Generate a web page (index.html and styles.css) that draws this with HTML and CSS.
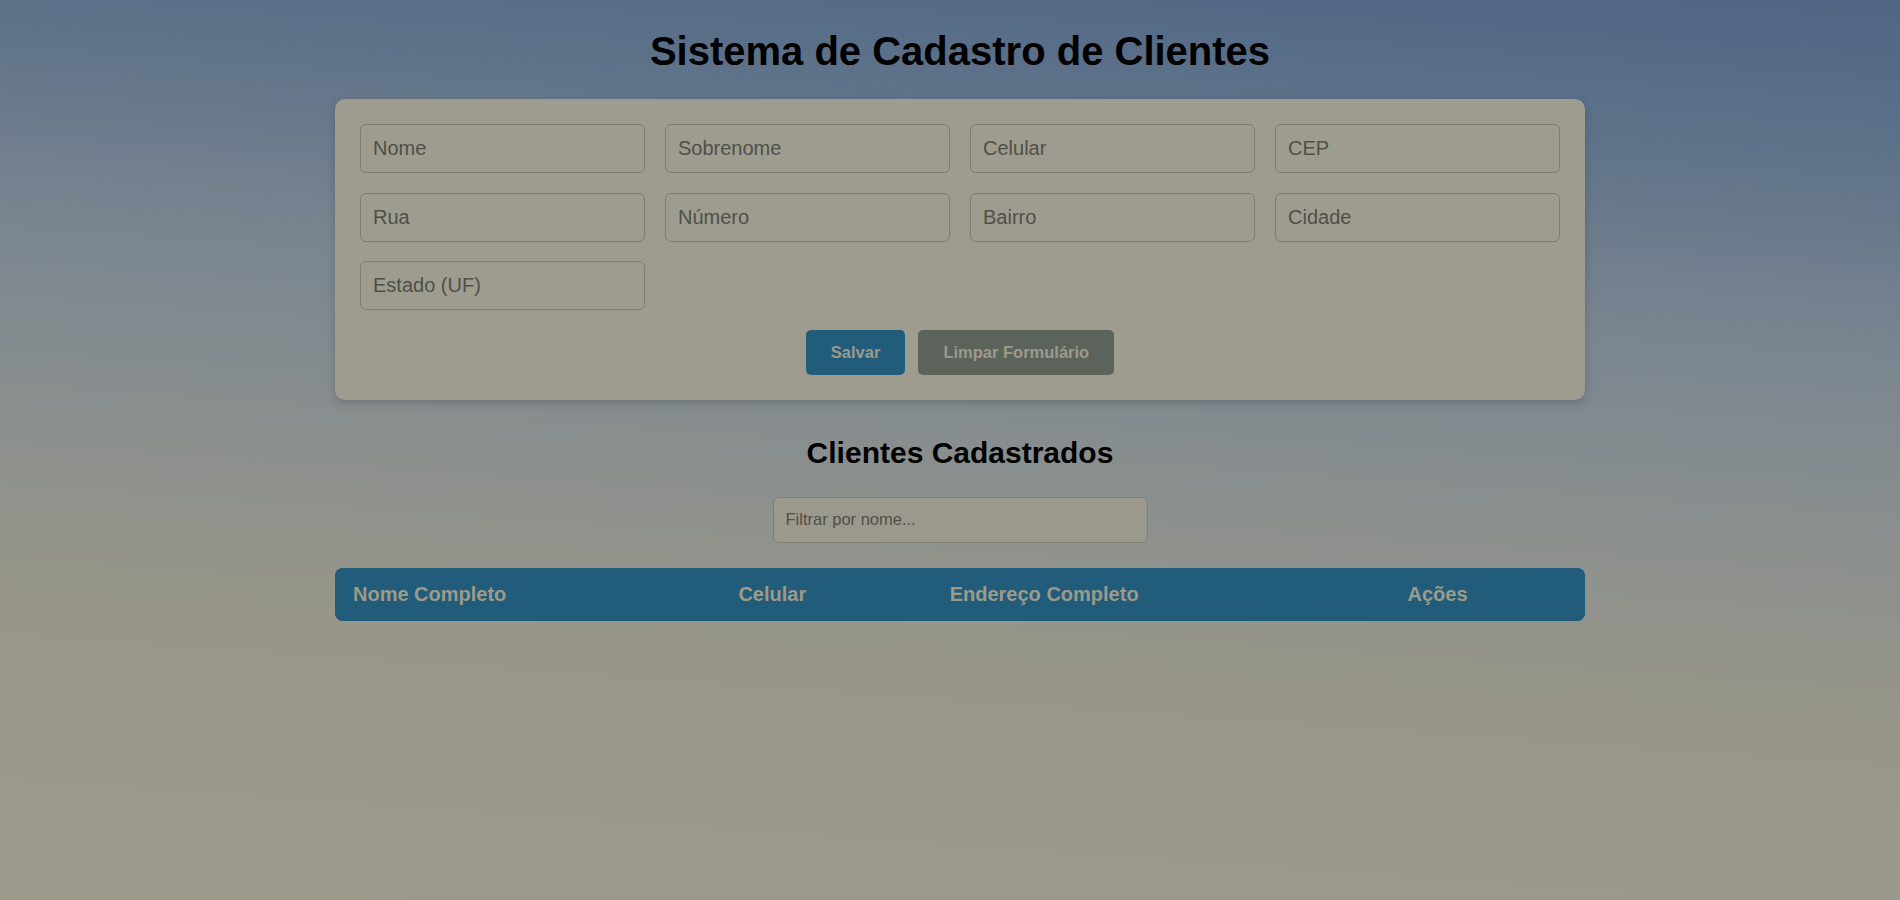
FILE: index.html
```html
<!DOCTYPE html>
<html lang="pt-BR">
<head>
<meta charset="utf-8">
<title>Sistema de Cadastro de Clientes</title>
<link rel="stylesheet" href="styles.css">
</head>
<body>
<div class="container">
  <h1 class="title">Sistema de Cadastro de Clientes</h1>
  <form class="card">
    <div class="grid">
      <input class="field" type="text" placeholder="Nome">
      <input class="field" type="text" placeholder="Sobrenome">
      <input class="field" type="text" placeholder="Celular">
      <input class="field" type="text" placeholder="CEP">
      <input class="field" type="text" placeholder="Rua">
      <input class="field" type="text" placeholder="Número">
      <input class="field" type="text" placeholder="Bairro">
      <input class="field" type="text" placeholder="Cidade">
      <input class="field" type="text" placeholder="Estado (UF)">
    </div>
    <div class="actions">
      <button type="button" class="btn btn-primary">Salvar</button>
      <button type="button" class="btn btn-secondary">Limpar Formulário</button>
    </div>
  </form>
  <h2 class="subtitle">Clientes Cadastrados</h2>
  <div class="filter-row">
    <input class="filter" type="text" placeholder="Filtrar por nome...">
  </div>
  <table class="table">
    <thead>
      <tr>
        <th>Nome Completo</th>
        <th>Celular</th>
        <th>Endereço Completo</th>
        <th>Ações</th>
      </tr>
    </thead>
    <tbody></tbody>
  </table>
</div>
</body>
</html>
```
FILE: styles.css
```css
* { box-sizing: border-box; }
html, body { height: 100%; }
body {
  margin: 0;
  padding: 28px 0 0 20px;
  font-family: "Liberation Sans", Arial, sans-serif;
  background: linear-gradient(184deg, #4f6583 0%, #5d7189 14%, #7a8590 34%, #8a8f8e 52%, #979689 70%, #9d9a8c 100%);
  background-attachment: fixed;
  color: #000;
}
.container {
  width: 1250px;
  margin: 0 auto;
}
.title {
  margin: 0 0 25px;
  font-size: 40px;
  line-height: 46px;
  font-weight: bold;
  text-align: center;
}
.card {
  background: #9e9c8e;
  border-radius: 10px;
  padding: 25px 25px 25px;
  box-shadow: 0 3px 8px rgba(40, 45, 50, 0.25);
}
.grid {
  display: grid;
  grid-template-columns: repeat(4, minmax(0, 1fr));
  column-gap: 20px;
  row-gap: 19.5px;
}
.field {
  width: 100%;
  min-width: 0;
  height: 49px;
  padding: 0 12px;
  border: 1px solid #807e74;
  border-radius: 6px;
  background: transparent;
  font-family: "Liberation Sans", Arial, sans-serif;
  font-size: 20px;
  color: #4d4d48;
  outline: none;
}
.field::placeholder, .filter::placeholder { color: #4f4f4a; opacity: 1; }
.actions {
  display: flex;
  justify-content: center;
  gap: 13px;
  margin-top: 20px;
}
.btn {
  height: 45px;
  padding: 0 25px;
  border: none;
  border-radius: 5px;
  font-family: "Liberation Sans", Arial, sans-serif;
  font-size: 16.5px;
  font-weight: bold;
  color: #9c9a8c;
}
.btn-primary { background: #215d7b; }
.btn-secondary { background: #5c635b; }
.subtitle {
  margin: 36px 0 26px;
  font-size: 30px;
  line-height: 34.5px;
  font-weight: bold;
  text-align: center;
}
.filter-row {
  display: flex;
  justify-content: center;
  margin-bottom: 25px;
}
.filter {
  width: 375px;
  height: 46px;
  padding: 0 12px;
  border: 1px solid #7f7e76;
  border-radius: 6px;
  background: #9b998b;
  font-family: "Liberation Sans", Arial, sans-serif;
  font-size: 16.5px;
  color: #4d4d48;
  outline: none;
}
.table {
  width: 100%;
  border-collapse: collapse;
  border-radius: 8px;
  overflow: hidden;
  background: #215d7a;
}
.table th {
  padding: 15px 18px;
  text-align: left;
  font-size: 20px;
  line-height: 23px;
  font-weight: bold;
  color: #9c9a8b;
  background: #215d7a;
}
```
